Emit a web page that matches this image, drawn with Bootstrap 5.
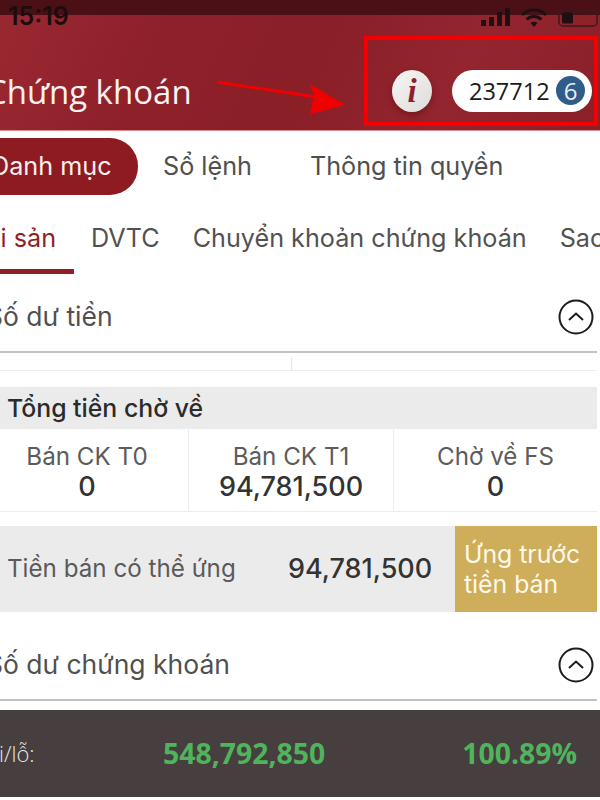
<!DOCTYPE html>
<html lang="vi">
<head>
<meta charset="utf-8">
<title>Chứng khoán</title>
<link href="https://cdn.jsdelivr.net/npm/bootstrap@5.3.0/dist/css/bootstrap.min.css" rel="stylesheet">
<style>
html,body{margin:0;background:#fff}
body{font-family:Inter,"Liberation Sans",sans-serif;color:#4a4a4a;width:600px;height:800px;overflow:hidden}
.screen{position:relative;width:600px;height:800px;overflow:hidden;background:#fff}
.hero{height:131px;background:linear-gradient(115deg,#9a2832 0%,#8e2029 28%,#8a1f28 52%,#93252f 75%,#8b2029 100%);border-bottom:1px solid #d98a8e;position:relative;overflow:hidden}
.topstrip{height:15px;background:#4b1016}
.clock{font:600 25px/1 Inter,sans-serif;color:#1d0c0e;margin-left:8px;margin-top:-11px}
.signal{margin-top:-8px;flex:none}
.herorow{height:116px;padding-top:46px}
.herotitle{font:500 33px/1 "Open Sans",sans-serif;color:#fbf1f1;margin-left:-14px;margin-top:14px}
.infoball{width:40px;height:42px;border-radius:50%;background:linear-gradient(135deg,#f8f6f5,#dedcdb);box-shadow:0 3px 6px rgba(60,0,0,.35);font:italic 700 33px/42px "Liberation Serif",serif;color:#8f1f2b;text-align:center;margin-left:392px;margin-top:9px;flex:none}
.userpill{width:140px;height:42px;border-radius:21px;background:#fff;color:#1b1b1b;font:400 23.500px/42px "Open Sans",sans-serif;margin-left:20px;margin-top:9px;padding-left:17px;flex:none;position:relative;white-space:nowrap}
.notecount{position:absolute;right:7px;top:6px;width:29px;height:29px;border-radius:50%;background:#2f5c88;color:#e8eef4;font:400 24px/29px "Open Sans",sans-serif;text-align:center}
.redbox{position:absolute;left:364px;top:36px;width:234px;height:90px;border:4px solid #f40000}
.arrow{position:absolute;left:210px;top:70px}
.tabsone{height:71px;padding-top:7px;font-size:25.200px;white-space:nowrap}
.pilltab{width:138px;height:57px;background:#8f1b22;color:#fbeeee;border-radius:0 28px 28px 0;line-height:57px;overflow:hidden;flex:none}
.pilltab span{margin-left:-9px;display:inline-block}
.plaintab{line-height:57px;color:#4f4f4f;flex:none}
.tabstwo{height:72px;font-size:25.200px;white-space:nowrap;position:relative;line-height:73px;color:#525252;overflow:hidden}
.activetab{width:74px;height:72px;border-bottom:5px solid #8f1f28;color:#8f1f28;flex:none;overflow:hidden;position:relative}
.activetab span{margin-left:-28px;display:inline-block}
.sechead{width:597px;height:79px;border-bottom:2px solid #c2c2c2;font-size:26.500px;color:#505050;padding-right:3px;padding-top:8px;white-space:nowrap}
.sechead .lbl{margin-left:-14px}
.sechead svg{flex:none}
.stubrow{width:597px;height:18px;border-bottom:1px solid #eee;padding-top:5px}
.stubline{width:1px;height:12px;background:#e6e6e6;margin-left:291px}
.grayhead{width:597px;height:42px;margin-top:16px;background:#ebebeb;color:#2b2b2b;font-size:24.800px;font-weight:500;line-height:42px;padding-left:7px;white-space:nowrap}
.cellrow{width:597px;height:83px;border-bottom:1px solid #ececec}
.cellbox{height:100%;text-align:center;padding-top:12px;color:#5c5c5c;font-size:24.200px;line-height:31px;flex:none}
.cellfirst{margin-left:-14px}
.cellbox + .cellbox{border-left:1px solid #ececec}
.cellbox b{display:block;font-size:27px;font-weight:500;color:#333;line-height:30px}
.sellrow{width:597px;height:86px;margin-top:14px;background:#ebebeb}
.selllbl{width:288px;padding-left:7px;font-size:24.200px;color:#5a5a5a;flex:none;white-space:nowrap}
.sellval{width:167px;font-size:27px;font-weight:500;color:#333;flex:none}
.goldbtn{width:142px;height:86px;background:#cfae5b;color:#fdf8ea;font-size:24.800px;line-height:30px;padding:13px 0 0 9px;flex:none;white-space:nowrap}
.stockhead{height:89px;padding-top:19px}
.darkbar{height:87px;margin-top:9px;background:#463e3f;white-space:nowrap}
.pllbl{color:#e9e5e4;font:300 22px/87px "Open Sans",sans-serif;width:163px;flex:none;overflow:hidden}
.pllbl span{margin-left:-24px;display:inline-block}
.plnum{font:700 28.400px/87px "Open Sans",sans-serif;color:#4fb45c;flex:none}
</style>
</head>
<body>
<div class="screen">
  <header class="hero">
    <div class="topstrip"></div>
    <div class="d-flex justify-content-between" style="height:0">
      <div class="clock">15:19</div>
      <svg class="signal" width="120" height="24" viewBox="0 0 120 24">
        <rect x="1" y="13" width="5" height="6" fill="#1e1012"/><rect x="9" y="10" width="5" height="9" fill="#1e1012"/><rect x="17" y="5" width="5" height="14" fill="#1e1012"/><rect x="25" y="1" width="5" height="18" fill="#1e1012"/>
        <path d="M42 8a17 17 0 0 1 24 0M46.500 12.500a11 11 0 0 1 15 0" fill="none" stroke="#1e1012" stroke-width="3"/><path d="M50.500 16a6 6 0 0 1 7 0L54 20z" fill="#1e1012"/>
        <rect x="79" y="3" width="38" height="16" rx="4" fill="none" stroke="#3c1a1d" stroke-width="1.500"/><rect x="82" y="5.500" width="11" height="11" rx="1.500" fill="#1e1012"/>
      </svg>
    </div>
    <div class="herorow d-flex align-items-start position-relative">
      <div class="d-flex w-100" style="height:60px">
        <div class="herotitle position-absolute" style="left:0">Chứng khoán</div>
        <div class="infoball">i</div>
        <div class="userpill">237712<span class="notecount">6</span></div>
      </div>
    </div>
    <svg class="arrow" width="140" height="45" viewBox="0 0 140 45"><path d="M7 12L106 27" stroke="#f00000" stroke-width="3"/><path d="M135 35L100 14L104 25L100 44z" fill="#f00000"/></svg>
    <div class="redbox"></div>
  </header>

  <nav class="tabsone d-flex">
    <div class="pilltab"><span>Danh mục</span></div>
    <div class="plaintab" style="margin-left:25px">Sổ lệnh</div>
    <div class="plaintab" style="margin-left:58px">Thông tin quyền</div>
  </nav>

  <nav class="tabstwo d-flex">
    <div class="activetab"><span>Tài sản</span></div>
    <div style="margin-left:17px">DVTC</div>
    <div style="margin-left:33px">Chuyển khoản chứng khoán</div>
    <div style="margin-left:33px">Sao kê</div>
  </nav>

  <section class="sechead d-flex justify-content-between align-items-center">
    <span class="lbl">Số dư tiền</span>
    <svg width="36" height="36" viewBox="0 0 36 36"><circle cx="18" cy="18" r="16.500" fill="none" stroke="#1c1c1c" stroke-width="2"/><path d="M11 21l7-6.500 7 6.500" fill="none" stroke="#1c1c1c" stroke-width="2"/></svg>
  </section>
  <div class="stubrow"><div class="stubline"></div></div>

  <div class="grayhead">Tổng tiền chờ về</div>
  <div class="cellrow d-flex">
    <div class="cellbox cellfirst" style="width:202px">Bán CK T0<b>0</b></div>
    <div class="cellbox" style="width:205px">Bán CK T1<b>94,781,500</b></div>
    <div class="cellbox" style="width:204px">Chờ về FS<b>0</b></div>
  </div>

  <div class="sellrow d-flex align-items-center">
    <div class="selllbl">Tiền bán có thể ứng</div>
    <div class="sellval">94,781,500</div>
    <div class="goldbtn">Ứng trước<br>tiền bán</div>
  </div>

  <section class="sechead stockhead d-flex justify-content-between align-items-center">
    <span class="lbl">Số dư chứng khoán</span>
    <svg width="36" height="36" viewBox="0 0 36 36"><circle cx="18" cy="18" r="16.500" fill="none" stroke="#1c1c1c" stroke-width="2"/><path d="M11 21l7-6.500 7 6.500" fill="none" stroke="#1c1c1c" stroke-width="2"/></svg>
  </section>

  <div class="darkbar d-flex">
    <div class="pllbl"><span>Lãi/lỗ:</span></div>
    <div class="plnum">548,792,850</div>
    <div class="plnum" style="margin-left:137px">100.89%</div>
  </div>
</div>
</body>
</html>
